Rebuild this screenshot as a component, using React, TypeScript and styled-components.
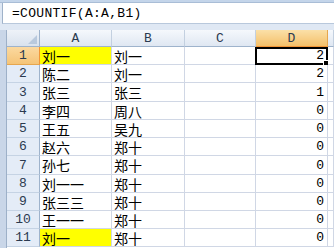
import React from "react";
import styled, { createGlobalStyle } from "styled-components";

const GlobalStyle = createGlobalStyle`
  html, body {
    margin: 0;
    padding: 0;
    background: #ffffff;
  }
`;

const Window = styled.div`
  width: 334px;
  height: 248px;
  overflow: hidden;
  display: flex;
  flex-direction: column;
  background: #dfe8f4;
  font-family: "Liberation Mono", "Noto Sans CJK SC", monospace;
`;

const TopStrip = styled.div`
  height: 3px;
  background: #c4d5ea;
  border-bottom: 1px solid #a9bdd6;
  box-sizing: border-box;
`;

const FormulaRow = styled.div`
  height: 21px;
  padding-left: 2px;
  display: flex;
`;

const FormulaInput = styled.div`
  flex: 1;
  background: #ffffff;
  border-left: 1px solid #9fb2c9;
  border-bottom: 1px solid #b8c8dc;
  display: flex;
  align-items: center;
  padding-left: 9px;
  font-size: 13px;
  color: #000;
  letter-spacing: 0.3px;
`;

const Band = styled.div`
  height: 6px;
  background: #dfe8f4;
`;

const Body = styled.div`
  flex: 1;
  display: flex;
  min-height: 0;
`;

const LeftStrip = styled.div`
  width: 10px;
  background: #c9d6e8;
  border-right: 1px solid #9db0c8;
  box-sizing: border-box;
`;

const Sheet = styled.div`
  flex: 1;
  display: grid;
  grid-template-columns: 33px 72px 73px 71px 72px 1fr;
  background: #ffffff;
  align-content: start;
`;

const Corner = styled.div`
  position: relative;
  height: 17px;
  background: linear-gradient(#eef2f8, #d9e2ee);
  border-right: 1px solid #9eb3cc;
  border-bottom: 1px solid #9eb3cc;
  box-sizing: border-box;
  &::after {
    content: "";
    position: absolute;
    right: 2px;
    bottom: 2px;
    border-left: 9px solid transparent;
    border-bottom: 9px solid #b9c9dd;
  }
`;

const ColHead = styled.div<{ $active?: boolean }>`
  height: 17px;
  box-sizing: border-box;
  display: flex;
  align-items: center;
  justify-content: center;
  font-size: 13px;
  color: #2b3a4f;
  background: ${(p) =>
    p.$active
      ? "linear-gradient(#fbe0a8, #f4c06a)"
      : "linear-gradient(#f5f8fc, #dfe7f2)"};
  border-right: 1px solid ${(p) => (p.$active ? "#e6a64e" : "#c3d0e0")};
  border-bottom: 1px solid ${(p) => (p.$active ? "#f29536" : "#9eb3cc")};
`;

const RowHead = styled.div<{ $active?: boolean; $h: number }>`
  height: ${(p) => p.$h}px;
  box-sizing: border-box;
  display: flex;
  align-items: center;
  justify-content: center;
  font-size: 13px;
  color: #2b3a4f;
  background: ${(p) =>
    p.$active ? "linear-gradient(#fbd9a0, #f5c477)" : "#e4ecf7"};
  border-right: 1px solid ${(p) => (p.$active ? "#f29536" : "#9eb3cc")};
  border-bottom: 1px solid ${(p) => (p.$active ? "#e6a64e" : "#c5d3e4")};
`;

const Cell = styled.div<{ $fill?: string; $num?: boolean; $h: number }>`
  position: relative;
  height: ${(p) => p.$h}px;
  box-sizing: border-box;
  display: flex;
  align-items: center;
  justify-content: ${(p) => (p.$num ? "flex-end" : "flex-start")};
  padding: 0 3px 0 2px;
  font-size: ${(p) => (p.$num ? 13 : 14)}px;
  color: #000;
  background: ${(p) => p.$fill || "#ffffff"};
  border-right: 1px solid #d0d7e5;
  border-bottom: 1px solid #d0d7e5;
  white-space: nowrap;
`;

const ActiveFrame = styled.div`
  position: absolute;
  left: -1px;
  top: 0;
  right: -1px;
  bottom: -1px;
  border: 2px solid #000;
  pointer-events: none;
  &::after {
    content: "";
    position: absolute;
    right: -4px;
    bottom: -4px;
    width: 5px;
    height: 5px;
    background: #000;
    border: 1px solid #fff;
  }
`;

const rows: [string, string, number][] = [
  ["刘一", "刘一", 2],
  ["陈二", "刘一", 2],
  ["张三", "张三", 1],
  ["李四", "周八", 0],
  ["王五", "吴九", 0],
  ["赵六", "郑十", 0],
  ["孙七", "郑十", 0],
  ["刘一一", "郑十", 0],
  ["张三三", "郑十", 0],
  ["王一一", "郑十", 0],
  ["刘一", "郑十", 0],
];

const heights = [18, 18, 19, 18, 18, 18, 19, 18, 18, 18, 18];
const yellow = new Set([0, 10]);

export default function App() {
  return (
    <>
      <GlobalStyle />
      <Window>
        <TopStrip />
        <FormulaRow>
          <FormulaInput>=COUNTIF(A:A,B1)</FormulaInput>
        </FormulaRow>
        <Band />
        <Body>
          <LeftStrip />
          <Sheet style={{ gridTemplateRows: `17px ${heights.map((h) => h + "px").join(" ")}` }}>
            <Corner />
            <ColHead>A</ColHead>
            <ColHead>B</ColHead>
            <ColHead>C</ColHead>
            <ColHead $active>D</ColHead>
            <ColHead />
            {rows.map(([a, b, d], i) => (
              <React.Fragment key={i}>
                <RowHead $h={heights[i]} $active={i === 0}>
                  {i + 1}
                </RowHead>
                <Cell $h={heights[i]} $fill={yellow.has(i) ? "#ffff00" : undefined}>
                  {a}
                </Cell>
                <Cell $h={heights[i]}>{b}</Cell>
                <Cell $h={heights[i]} />
                <Cell $h={heights[i]} $num>
                  {d}
                  {i === 0 && <ActiveFrame />}
                </Cell>
                <Cell $h={heights[i]} />
              </React.Fragment>
            ))}
          </Sheet>
        </Body>
      </Window>
    </>
  );
}
